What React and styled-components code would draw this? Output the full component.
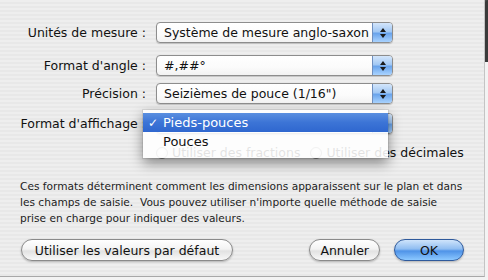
import React from "react";
import styled, { createGlobalStyle } from "styled-components";

const Global = createGlobalStyle`
  html, body { margin: 0; padding: 0; background: #f4f4f4; }
  body { font-family: "DejaVu Sans", "Liberation Sans", sans-serif; }
`;

const Page = styled.div`
  position: relative;
  width: 488px;
  height: 280px;
  overflow: hidden;
  background: #f3f3f3;
`;

const Sheet = styled.div`
  position: relative;
  width: 485px;
  height: 277px;
  box-sizing: border-box;
  border-right: 1px solid #c4c4c4;
  border-bottom: 1px solid #a8a8a8;
  background: repeating-linear-gradient(
    to bottom,
    #eeeeee 0px,
    #eeeeee 2px,
    #e8e8e8 2px,
    #e8e8e8 4px
  );
  padding: 22px 0 0 0;
  display: flex;
  flex-direction: column;
`;

const GhostWindow = styled.div`
  position: absolute;
  left: 0;
  top: 0;
  width: 488px;
  height: 62px;
  box-sizing: border-box;
  border-top: 2px solid #4a4a4a;
  border-left: 2px solid #3a3a3a;
  border-right: 3px solid #3a3a3a;
  background: linear-gradient(to bottom, #f4f5f7, #f0f1f3);
  display: flex;
  align-items: flex-start;
  padding-top: 5px;
  pointer-events: none;
`;

const GhostLabel = styled.span`
  width: ${(p) => p.w}px;
  text-align: center;
  font-size: 11px;
  color: #e1e4e8;
`;

const Form = styled.div`
  position: relative;
  display: grid;
  grid-template-columns: 126px 237px;
  column-gap: 10px;
  align-items: center;
  padding-left: 20px;
`;

const Label = styled.div`
  font-size: 12.5px;
  color: #111;
  text-align: right;
  white-space: nowrap;
  margin-top: ${(p) => p.mt || 0}px;
`;

const PopupBox = styled.div`
  position: relative;
  height: 21px;
  margin-top: ${(p) => p.mt || 0}px;
  box-sizing: border-box;
  border: 1px solid #8d8d8d;
  border-radius: 4px;
  background: linear-gradient(to bottom, #ffffff, #fbfbfb 60%, #f2f2f2);
  box-shadow: 0 1px 1px rgba(0, 0, 0, 0.18);
  display: flex;
  align-items: center;
  overflow: hidden;
`;

const PopupText = styled.span`
  flex: 1;
  padding-left: 7px;
  font-size: 12.5px;
  color: #111;
  white-space: nowrap;
`;

const ArrowPart = styled.span`
  width: 20px;
  height: 100%;
  box-sizing: border-box;
  border-left: 1px solid #6f8fbf;
  background: linear-gradient(
    to bottom,
    #d4e6fb 0%,
    #a2c8f4 45%,
    #6aa4ec 55%,
    #a9d3ff 100%
  );
  display: flex;
  flex-direction: column;
  align-items: center;
  justify-content: center;
  gap: 2px;
`;

const Tri = styled.span`
  width: 0;
  height: 0;
  border-left: 3px solid transparent;
  border-right: 3px solid transparent;
  ${(p) =>
    p.up
      ? "border-bottom: 4px solid #1a1a1a;"
      : "border-top: 4px solid #1a1a1a;"}
`;

const Popup = ({ children, mt }) => (
  <PopupBox mt={mt}>
    <PopupText>{children}</PopupText>
    <ArrowPart>
      <Tri up />
      <Tri />
    </ArrowPart>
  </PopupBox>
);

const RadioRow = styled.div`
  grid-column: 2 / span 1;
  margin-top: 11px;
  display: flex;
  align-items: center;
  white-space: nowrap;
  font-size: 12.5px;
  color: #111;
`;

const RadioItem = styled.span`
  display: inline-flex;
  align-items: center;
  gap: 4px;
  margin-left: ${(p) => p.ml || 0}px;
`;

const RadioDot = styled.span`
  width: 12px;
  height: 12px;
  box-sizing: border-box;
  border-radius: 50%;
  border: 1px solid #888;
  background: radial-gradient(circle at 50% 40%, #fff, #dcdcdc);
`;

const Menu = styled.div`
  position: absolute;
  left: 143px;
  top: 88px;
  width: 245px;
  padding: 3px 0 7px;
  background: rgba(255, 255, 255, 0.88);
  box-shadow: 0 5px 12px rgba(0, 0, 0, 0.45), 0 0 0 1px rgba(0, 0, 0, 0.08);
  z-index: 2;
`;

const MenuItem = styled.div`
  height: 19px;
  display: flex;
  align-items: center;
  font-size: 13px;
  color: ${(p) => (p.active ? "#fff" : "#111")};
  background: ${(p) =>
    p.active ? "linear-gradient(to bottom, #5a8fe0, #3c74d6 50%, #2f67cf)" : "transparent"};
`;

const Check = styled.span`
  width: 20px;
  text-align: center;
  font-size: 12px;
`;

const Paragraph = styled.p`
  margin: 18px 0 0 20px;
  font-size: 10.6px;
  line-height: 16px;
  color: #222;
  white-space: nowrap;
`;

const ButtonRow = styled.div`
  margin-top: 13px;
  padding: 0 20px 0 21px;
  display: flex;
  align-items: center;
`;

const Spacer = styled.div`
  flex: 1;
`;

const AquaButton = styled.button`
  height: 22px;
  min-width: ${(p) => p.w}px;
  margin-left: ${(p) => p.ml || 0}px;
  padding: 0 10px;
  border-radius: 11px;
  font-family: "DejaVu Sans", "Liberation Sans", sans-serif;
  font-size: 12.5px;
  color: #111;
  border: 1px solid ${(p) => (p.primary ? "#2f5a9c" : "#8a8a8a")};
  background: ${(p) =>
    p.primary
      ? "linear-gradient(to bottom, #cfe4fb 0%, #8fbdf1 45%, #4f93e8 55%, #8cc8ff 100%)"
      : "linear-gradient(to bottom, #ffffff 0%, #f3f3f3 45%, #e2e2e2 55%, #f8f8f8 100%)"};
  box-shadow: 0 1px 2px rgba(0, 0, 0, 0.25);
  display: flex;
  align-items: center;
  justify-content: center;
`;

export default function App() {
  return (
    <>
      <Global />
      <Page>
        <GhostWindow>
          <GhostLabel w={200}>Nombre</GhostLabel>
          <GhostLabel w={80}>Toit</GhostLabel>
          <GhostLabel w={60}>CVCA</GhostLabel>
          <GhostLabel w={140}>Terrasse</GhostLabel>
        </GhostWindow>
        <Sheet>
          <Form>
            <Label>Unités de mesure :</Label>
            <Popup>Système de mesure anglo-saxon</Popup>
            <Label mt={12}>Format d'angle :</Label>
            <Popup mt={12}>#,##°</Popup>
            <Label mt={7}>Précision :</Label>
            <Popup mt={7}>Seizièmes de pouce (1/16")</Popup>
            <Label mt={9}>Format d'affichage :</Label>
            <Popup mt={9}>Pieds-pouces</Popup>
            <RadioRow>
              <RadioItem>
                <RadioDot />
                Utiliser des fractions
              </RadioItem>
              <RadioItem ml={10}>
                <RadioDot />
                Utiliser des décimales
              </RadioItem>
            </RadioRow>
            <Menu>
              <MenuItem active>
                <Check>✓</Check>Pieds-pouces
              </MenuItem>
              <MenuItem>
                <Check />Pouces
              </MenuItem>
            </Menu>
          </Form>
          <Paragraph>
            Ces formats déterminent comment les dimensions apparaissent sur le plan et dans
            <br />
            les champs de saisie.&nbsp; Vous pouvez utiliser n'importe quelle méthode de saisie
            <br />
            prise en charge pour indiquer des valeurs.
          </Paragraph>
          <ButtonRow>
            <AquaButton w={212}>Utiliser les valeurs par défaut</AquaButton>
            <Spacer />
            <AquaButton w={67}>Annuler</AquaButton>
            <AquaButton w={70} ml={14} primary>
              OK
            </AquaButton>
          </ButtonRow>
        </Sheet>
      </Page>
    </>
  );
}
